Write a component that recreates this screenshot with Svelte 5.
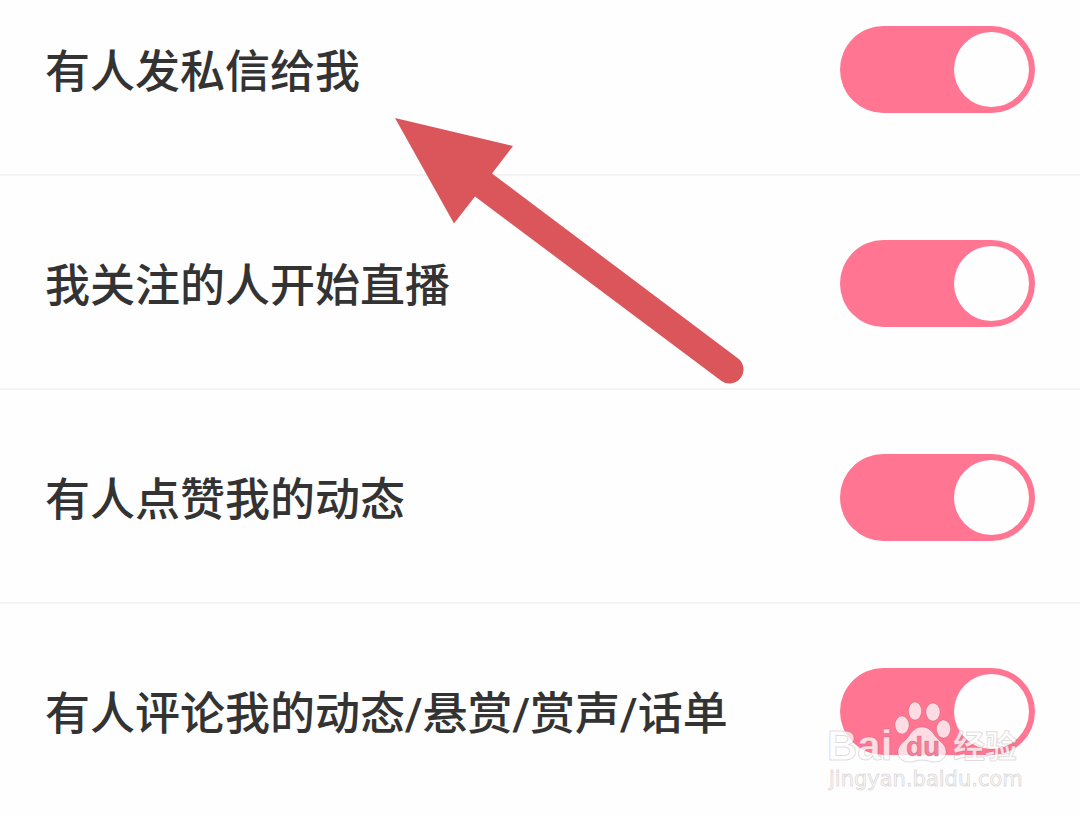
<script>
  let settings = [
    { id: "message", label: "有人发私信给我", on: true },
    { id: "live", label: "我关注的人开始直播", on: true },
    { id: "like", label: "有人点赞我的动态", on: true },
    { id: "comment", label: "有人评论我的动态/悬赏/赏声/话单", on: true },
  ]
</script>

<main class="settings">
  {#each settings as setting}
    <div class="row">
      <label for={setting.id}>{setting.label}</label>
      <input id={setting.id} class="switch" type="checkbox" role="switch" bind:checked={setting.on} />
    </div>
  {/each}

  <svg class="arrow" width="360" height="280" viewBox="0 0 360 280" aria-hidden="true">
    <path d="M5 8 L123 36 L102 63.5 L347.5 248 A14 14 0 0 1 331.5 271 L85 86.5 L64 113.5 Z" />
  </svg>

  <svg class="watermark" width="210" height="100" viewBox="0 0 210 100">
    <ellipse cx="82" cy="29" rx="7" ry="9" />
    <ellipse cx="95" cy="15" rx="6.5" ry="9" />
    <ellipse cx="113" cy="16" rx="7" ry="9" />
    <ellipse cx="123.5" cy="33" rx="7" ry="9" />
    <path d="M102 31 C108 31 112 35 115 40 C119 45 126 48 126 56 C126 62 121 66 115 66 C110 66 107 64 102 64 C97 64 94 66 89 66 C82 66 78 62 78 56 C78 48 85 46 89 40 C92 35 96 31 102 31 Z" />
    <text class="bai" x="7" y="64">Bai</text>
    <text class="du" x="86" y="60">du</text>
    <text class="jingyan" x="133" y="62">经验</text>
    <text class="url" x="9" y="90">jingyan.baidu.com</text>
  </svg>
</main>

<style>
  :global(body) {
    background: #fefefe;
  }
  .settings {
    position: relative;
    overflow: hidden;
    font-family: Roboto, "Noto Sans CJK SC", sans-serif;
    color: #333;
  }
  .row {
    display: flex;
    align-items: center;
    justify-content: space-between;
    padding: 64px 45px 61px;
    border-bottom: 2px solid #f3f3f3;
  }
  .row:first-child {
    padding-top: 26px;
  }
  .row:nth-child(4) {
    border-bottom: none;
  }
  label {
    padding-top: 6px;
    font-size: 45px;
    font-weight: 500;
    line-height: 60px;
  }
  .switch {
    appearance: none;
    flex: none;
    box-sizing: border-box;
    width: 195px;
    height: 87px;
    margin: 0;
    padding: 6px;
    border-radius: 44px;
    background: #ccc;
    cursor: pointer;
  }
  .switch::before {
    content: "";
    display: block;
    width: 75px;
    height: 75px;
    border-radius: 50%;
    background: #fefefe;
  }
  .switch:checked {
    background: #ff7592;
  }
  .switch:checked::before {
    margin-left: auto;
  }
  .arrow {
    position: absolute;
    top: 110px;
    left: 390px;
    fill: #db565b;
    pointer-events: none;
  }
  .watermark {
    position: absolute;
    right: 50px;
    bottom: 20px;
    fill: rgba(255, 255, 255, 0.75);
    stroke: rgba(90, 70, 75, 0.2);
    stroke-width: 1;
    pointer-events: none;
  }
  .watermark text {
    font-family: "Liberation Sans", Arial, sans-serif;
  }
  .watermark .bai {
    font-size: 42px;
    font-weight: 700;
  }
  .watermark .du {
    font-size: 28px;
    font-weight: 700;
    fill: #f77f99;
  }
  .watermark .jingyan {
    font-family: "Noto Sans CJK SC", sans-serif;
    font-size: 32px;
    font-weight: 700;
  }
  .watermark .url {
    font-family: "DejaVu Sans", Verdana, sans-serif;
    font-size: 21px;
  }
</style>
